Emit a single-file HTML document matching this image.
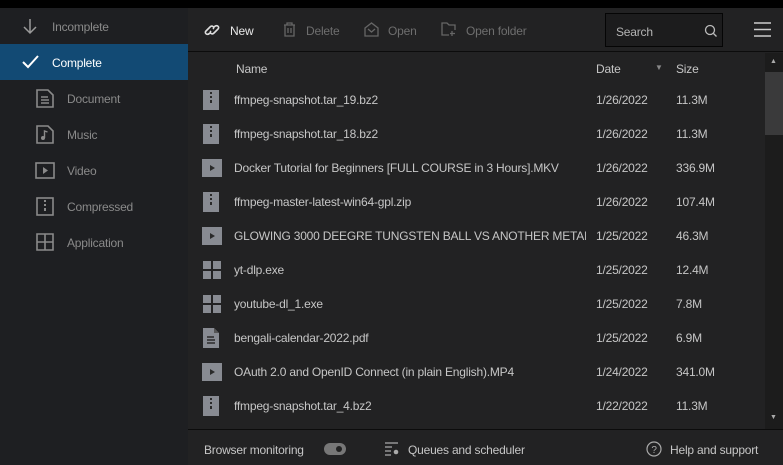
<!DOCTYPE html>
<html><head><style>
*{margin:0;padding:0;box-sizing:border-box}
body{width:783px;height:465px;background:#000;font-family:"Liberation Sans",sans-serif;font-size:12px;letter-spacing:-0.2px;position:relative;overflow:hidden;color:#ccc}
.side{position:absolute;left:0;top:8px;width:188px;height:457px;background:#1e1f22}
.si{position:absolute;left:0;width:188px;height:36px;display:flex;align-items:center;color:#8a8a8a}
.si svg{position:absolute}
.si span{position:absolute}
.main{position:absolute;left:188px;top:8px;width:595px;height:457px;background:#222223}
.tb{position:absolute;left:0;top:0;width:595px;height:44px;border-bottom:1px solid #0c0c0c}
.tbi{position:absolute;top:16px;color:#6e6e6e}
.row{position:absolute;left:0;width:577px;height:34px}
.row .ic{position:absolute;left:15px;top:8px}
.row .n{position:absolute;left:46px;top:11px;color:#c6c6c6;width:352px;white-space:nowrap;overflow:hidden}
.row .d{position:absolute;left:408px;top:11px;color:#c6c6c6}
.row .s{position:absolute;left:488px;top:11px;color:#c6c6c6}
.foot{position:absolute;left:0;top:421px;width:595px;height:36px;border-top:1px solid #0c0c0c;color:#c6c6c6}
</style></head><body>
<div class="side">
 <div class="si" style="top:0"><svg style="left:22px;top:10px" width="16" height="17" viewBox="0 0 16 17"><path d="M8 1v14M2 9l6 6 6-6" stroke="#9a9a9a" stroke-width="1.5" fill="none"/></svg><span style="left:52px;top:12px">Incomplete</span></div>
 <div class="si" style="top:36px;background:#124a74;color:#fff"><svg style="left:22px;top:11px" width="17" height="14" viewBox="0 0 17 14"><path d="M1 7l5 5L16 1" stroke="#fff" stroke-width="2" fill="none"/></svg><span style="left:52px;top:12px">Complete</span></div>
 <div class="si" style="top:72px"><svg style="left:36px;top:9px" width="18" height="19" viewBox="0 0 18 19"><path d="M1 1h11l5 5v12H1z M5 8h7M5 11h8M5 14h8" stroke="#8a8a8a" stroke-width="1.6" fill="none"/></svg><span style="left:67px;top:12px">Document</span></div>
 <div class="si" style="top:108px"><svg style="left:36px;top:9px" width="18" height="19" viewBox="0 0 18 19"><path d="M1 1h11l5 5v12H1z" stroke="#8a8a8a" stroke-width="1.6" fill="none"/><circle cx="7" cy="13" r="2" fill="#8a8a8a"/><path d="M8.5 13V6l3 1" stroke="#8a8a8a" stroke-width="1.4" fill="none"/></svg><span style="left:67px;top:12px">Music</span></div>
 <div class="si" style="top:144px"><svg style="left:35px;top:10px" width="20" height="17" viewBox="0 0 20 17"><rect x="1" y="1" width="18" height="15" stroke="#8a8a8a" stroke-width="1.6" fill="none"/><path d="M8 5v7l5-3.5z" fill="#8a8a8a"/></svg><span style="left:67px;top:12px">Video</span></div>
 <div class="si" style="top:180px"><svg style="left:36px;top:9px" width="18" height="19" viewBox="0 0 18 19"><rect x="1" y="1" width="16" height="17" stroke="#8a8a8a" stroke-width="1.6" fill="none"/><path d="M8 3h2v2H8zM8 7h2v2H8zM8 11h2v3H8z" fill="#8a8a8a"/></svg><span style="left:67px;top:12px">Compressed</span></div>
 <div class="si" style="top:216px"><svg style="left:36px;top:9px" width="18" height="18" viewBox="0 0 18 18"><path d="M1 1h16v16H1zM9 1v16M1 9h16" stroke="#8a8a8a" stroke-width="1.6" fill="none"/></svg><span style="left:67px;top:12px">Application</span></div>
</div>
<div class="main">
 <div class="tb">
  <svg style="position:absolute;left:16px;top:13px" width="16" height="18" viewBox="0 0 16 18"><path d="M6 12c-3 3-6 0-4-2l4-4c2-2 5 0 3 2M10 6c3-3 6 0 4 2l-4 4c-2 2-5 0-3-2" stroke="#ddd" stroke-width="1.6" fill="none"/></svg>
  <span class="tbi" style="left:42px;color:#e8e8e8">New</span>
  <svg style="position:absolute;left:95px;top:14px" width="13" height="15" viewBox="0 0 13 15"><path d="M1 3h11M4 3V1h5v2M2 3v11h9V3M5 6v5M8 6v5" stroke="#666" stroke-width="1.3" fill="none"/></svg>
  <span class="tbi" style="left:118px">Delete</span>
  <svg style="position:absolute;left:176px;top:14px" width="15" height="15" viewBox="0 0 15 15"><path d="M1 6l6.5-5L14 6v8H1zM4 7l3.5 3L11 7" stroke="#666" stroke-width="1.3" fill="none"/></svg>
  <span class="tbi" style="left:200px">Open</span>
  <svg style="position:absolute;left:253px;top:14px" width="15" height="14" viewBox="0 0 15 14"><path d="M8 13H1V1h5l2 2h6v5M11 9v5M9 11.5h5" stroke="#666" stroke-width="1.3" fill="none"/></svg>
  <span class="tbi" style="left:278px">Open folder</span>
  <div style="position:absolute;left:417px;top:5px;width:118px;height:34px;border:1px solid #050505;background:#1c1c1d"><span style="position:absolute;left:10px;top:11px;color:#b4b4b4">Search</span>
   <svg style="position:absolute;left:98px;top:10px" width="14" height="14" viewBox="0 0 14 14"><circle cx="6" cy="6" r="4.5" stroke="#bbb" stroke-width="1.3" fill="none"/><path d="M9.5 9.5l3 3" stroke="#bbb" stroke-width="1.3"/></svg></div>
  <svg style="position:absolute;left:566px;top:14px" width="17" height="15" viewBox="0 0 17 15"><path d="M0 1h17M0 7.5h17M0 14h17" stroke="#ccc" stroke-width="1.5"/></svg>
 </div>
 <span style="position:absolute;left:48px;top:54px;color:#c6c6c6">Name</span>
 <span style="position:absolute;left:408px;top:54px;color:#c6c6c6">Date</span>
 <span style="position:absolute;left:467px;top:55px;color:#888;font-size:8px">▼</span>
 <span style="position:absolute;left:488px;top:54px;color:#c6c6c6">Size</span>
 <div style="position:absolute;left:577px;top:45px;width:18px;height:376px;background:#1c1c1c"></div>
 <div style="position:absolute;left:577px;top:64px;width:18px;height:63px;background:#3a3a3b"></div>
 <span style="position:absolute;left:582px;top:50px;color:#aaa;font-size:7px">▲</span>
 <span style="position:absolute;left:582px;top:406px;color:#aaa;font-size:7px">▼</span>

 <div class="row" style="top:74px"><svg class="ic" width="16" height="20"><rect width="16" height="20" fill="#888b92"/><path d="M7 2h2v2H7zM7 6h2v2H7zM7 10h2v3H7z" fill="#2a2a2a"/></svg><span class="n">ffmpeg-snapshot.tar_19.bz2</span><span class="d">1/26/2022</span><span class="s">11.3M</span></div>
 <div class="row" style="top:108px"><svg class="ic" width="16" height="20"><rect width="16" height="20" fill="#888b92"/><path d="M7 2h2v2H7zM7 6h2v2H7zM7 10h2v3H7z" fill="#2a2a2a"/></svg><span class="n">ffmpeg-snapshot.tar_18.bz2</span><span class="d">1/26/2022</span><span class="s">11.3M</span></div>
 <div class="row" style="top:142px"><svg class="ic" width="20" height="18" style="left:14px;top:9px"><rect width="20" height="18" fill="#888b92"/><path d="M8 6v6l5-3z" fill="#2a2a2a"/></svg><span class="n">Docker Tutorial for Beginners [FULL COURSE in 3 Hours].MKV</span><span class="d">1/26/2022</span><span class="s">336.9M</span></div>
 <div class="row" style="top:176px"><svg class="ic" width="16" height="20"><rect width="16" height="20" fill="#888b92"/><path d="M7 2h2v2H7zM7 6h2v2H7zM7 10h2v3H7z" fill="#2a2a2a"/></svg><span class="n">ffmpeg-master-latest-win64-gpl.zip</span><span class="d">1/26/2022</span><span class="s">107.4M</span></div>
 <div class="row" style="top:210px"><svg class="ic" width="20" height="18" style="left:14px;top:9px"><rect width="20" height="18" fill="#888b92"/><path d="M8 6v6l5-3z" fill="#2a2a2a"/></svg><span class="n">GLOWING 3000 DEEGRE TUNGSTEN BALL VS ANOTHER METAL.MI</span><span class="d">1/25/2022</span><span class="s">46.3M</span></div>
 <div class="row" style="top:244px"><svg class="ic" width="18" height="18" style="top:9px"><path d="M0 0h8v8H0zM10 0h8v8h-8zM0 10h8v8H0zM10 10h8v8h-8z" fill="#888b92"/></svg><span class="n">yt-dlp.exe</span><span class="d">1/25/2022</span><span class="s">12.4M</span></div>
 <div class="row" style="top:278px"><svg class="ic" width="18" height="18" style="top:9px"><path d="M0 0h8v8H0zM10 0h8v8h-8zM0 10h8v8H0zM10 10h8v8h-8z" fill="#888b92"/></svg><span class="n">youtube-dl_1.exe</span><span class="d">1/25/2022</span><span class="s">7.8M</span></div>
 <div class="row" style="top:312px"><svg class="ic" width="16" height="20"><path d="M0 0h11l5 5v15H0z" fill="#888b92"/><path d="M11 0v5h5" fill="#555"/><path d="M4 9h7M4 12h8M4 15h8" stroke="#2a2a2a" stroke-width="1.5"/></svg><span class="n">bengali-calendar-2022.pdf</span><span class="d">1/25/2022</span><span class="s">6.9M</span></div>
 <div class="row" style="top:346px"><svg class="ic" width="20" height="18" style="left:14px;top:9px"><rect width="20" height="18" fill="#888b92"/><path d="M8 6v6l5-3z" fill="#2a2a2a"/></svg><span class="n">OAuth 2.0 and OpenID Connect (in plain English).MP4</span><span class="d">1/24/2022</span><span class="s">341.0M</span></div>
 <div class="row" style="top:380px"><svg class="ic" width="16" height="20"><rect width="16" height="20" fill="#888b92"/><path d="M7 2h2v2H7zM7 6h2v2H7zM7 10h2v3H7z" fill="#2a2a2a"/></svg><span class="n">ffmpeg-snapshot.tar_4.bz2</span><span class="d">1/22/2022</span><span class="s">11.3M</span></div>

 <div class="foot">
  <span style="position:absolute;left:16px;top:13px">Browser monitoring</span>
  <div style="position:absolute;left:136px;top:13px;width:22px;height:12px;border-radius:6px;background:#777"><div style="position:absolute;left:12px;top:3px;width:6px;height:6px;border-radius:3px;background:#222"></div></div>
  <svg style="position:absolute;left:197px;top:12px" width="14" height="14" viewBox="0 0 14 14"><path d="M0 1h13M0 5h7M0 9h6M0 13h6" stroke="#aaa" stroke-width="1.2"/><circle cx="11" cy="10" r="2.3" fill="#aaa"/></svg>
  <span style="position:absolute;left:220px;top:13px">Queues and scheduler</span>
  <svg style="position:absolute;left:458px;top:11px" width="16" height="16" viewBox="0 0 16 16"><circle cx="8" cy="8" r="7" stroke="#aaa" stroke-width="1.2" fill="none"/><text x="8" y="12" font-size="10" text-anchor="middle" fill="#aaa" font-family="Liberation Sans">?</text></svg>
  <span style="position:absolute;left:482px;top:13px">Help and support</span>
 </div>
</div>
</body></html>
